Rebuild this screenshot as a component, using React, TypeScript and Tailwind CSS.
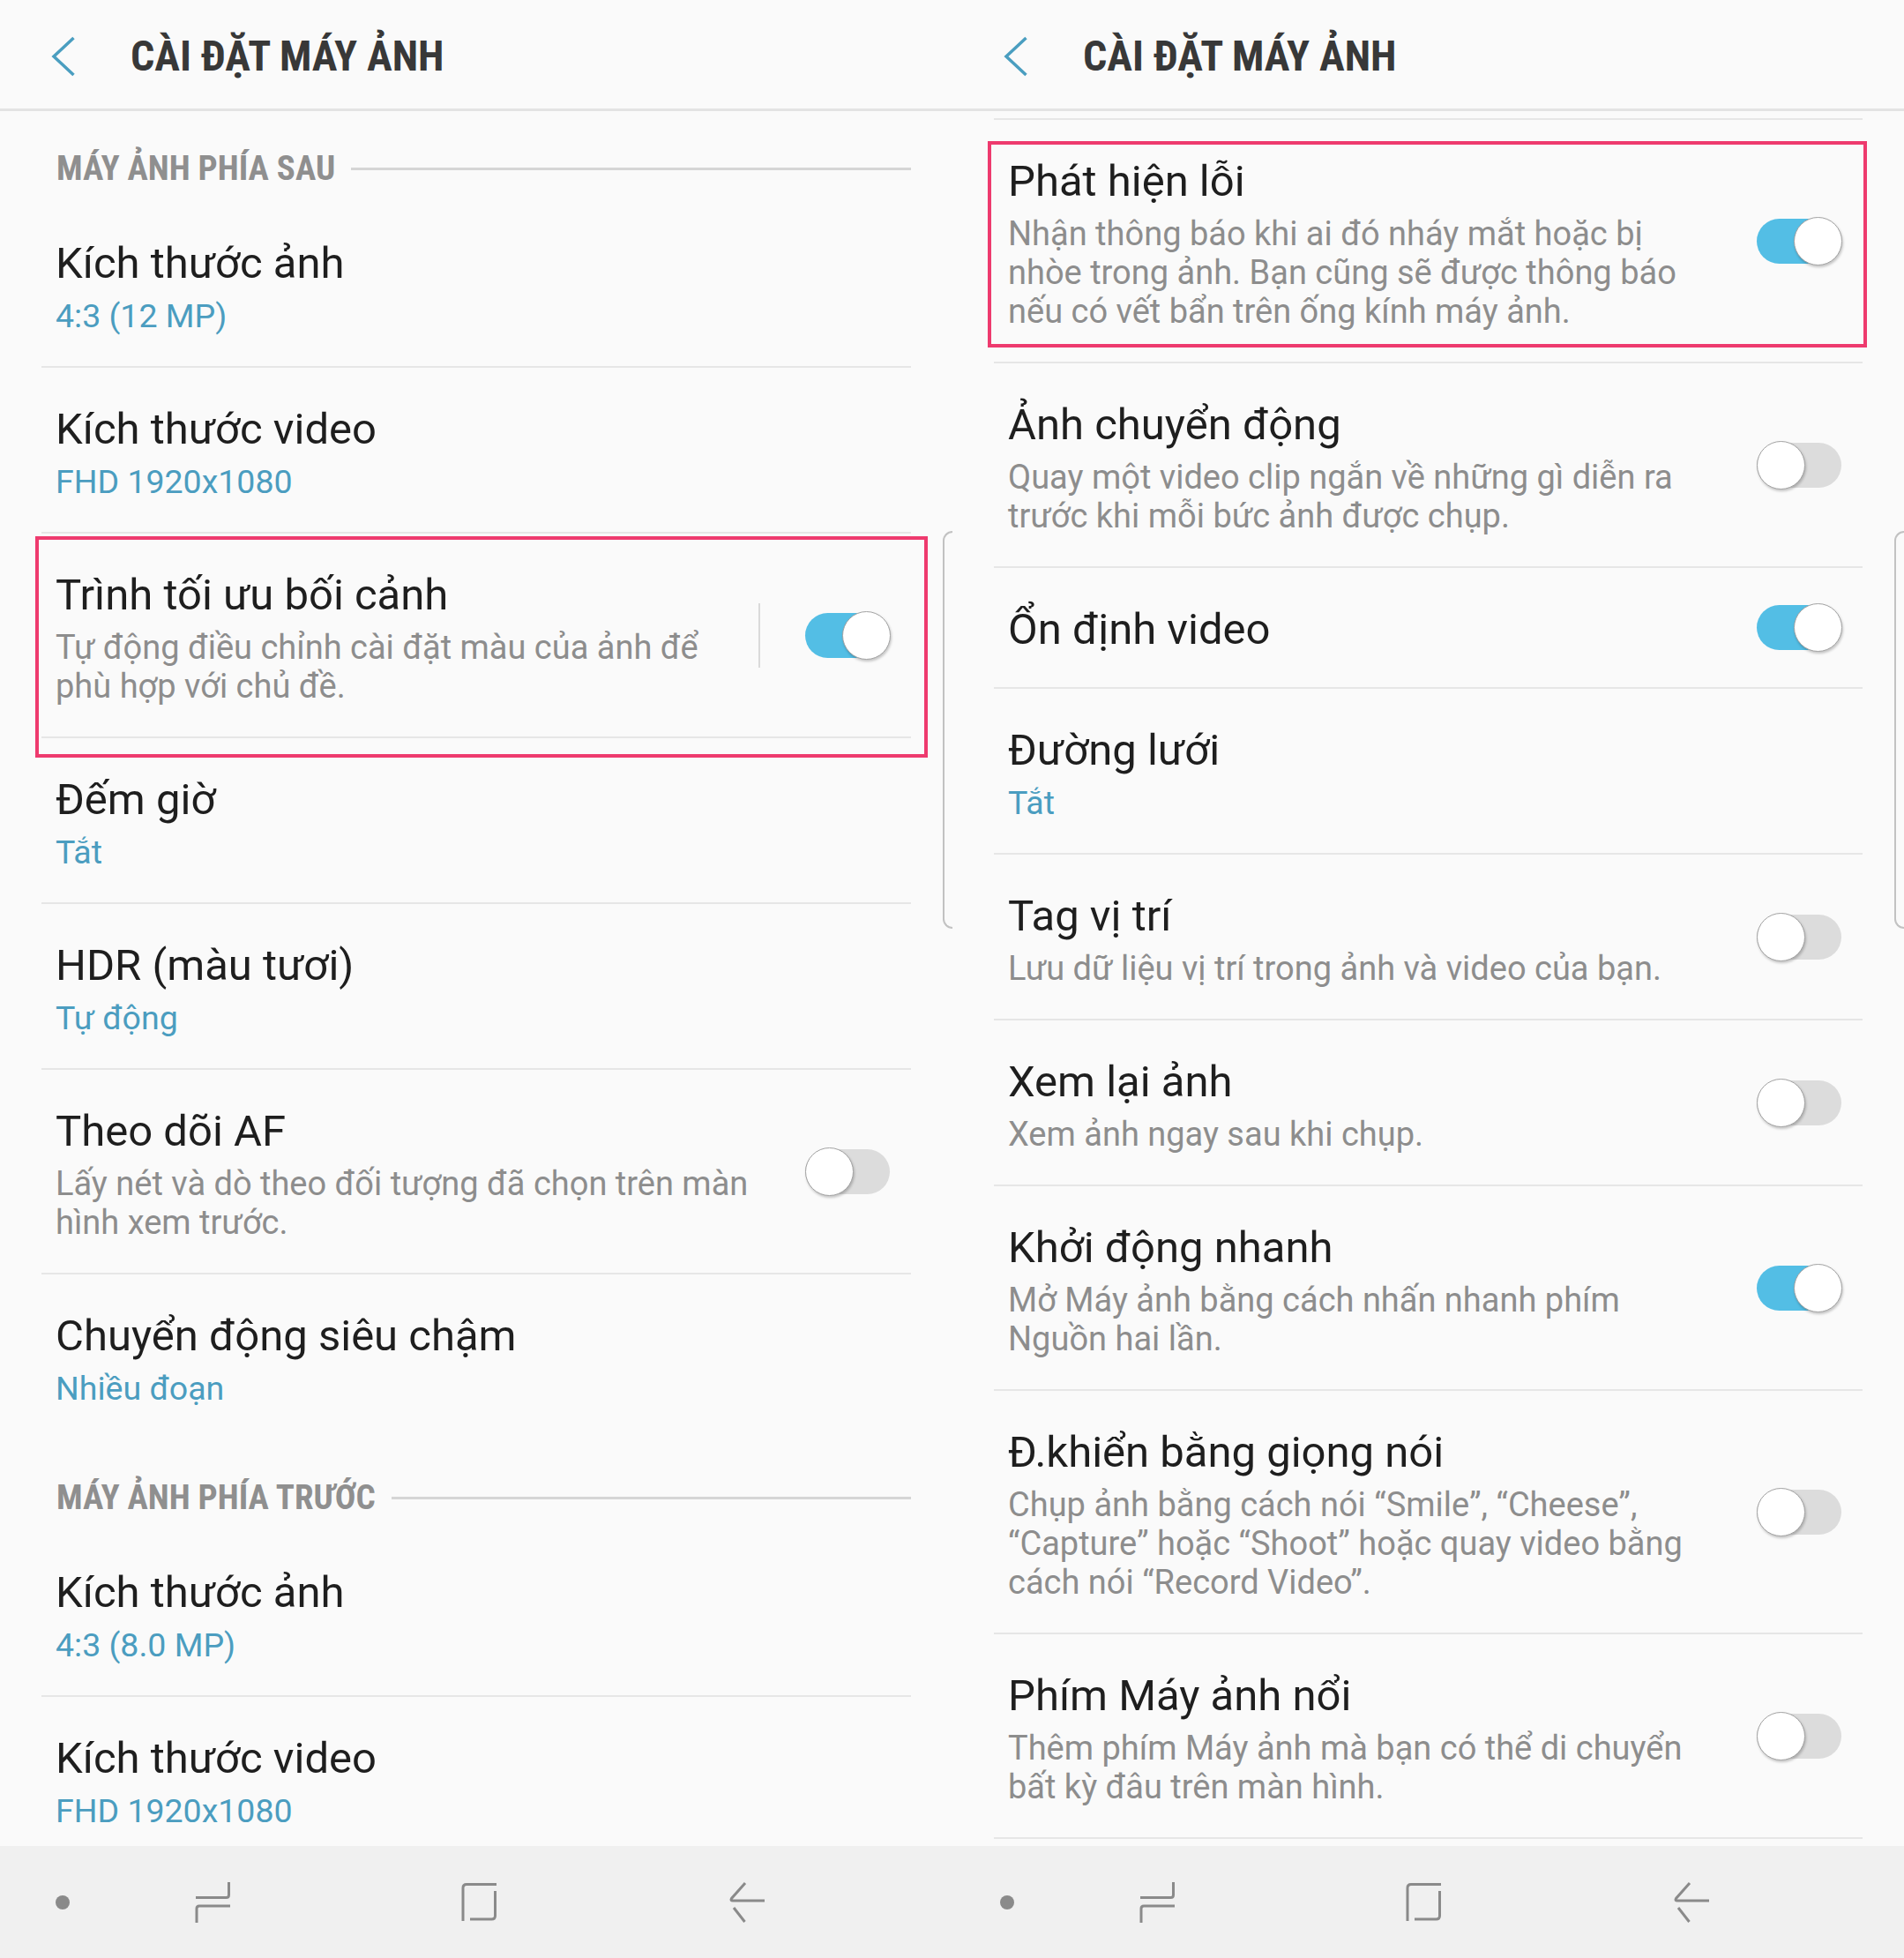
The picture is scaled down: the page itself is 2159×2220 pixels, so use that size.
import type React from "react";

type Row = {
  title: string;
  sub?: string;
  desc?: string[];
  toggle?: "on" | "off";
  separator?: boolean;
  noDivider?: boolean;
};

type Block = { section: string } | Row;

const LEFT: Block[] = [
  { section: "MÁY ẢNH PHÍA SAU" },
  { title: "Kích thước ảnh", sub: "4:3 (12 MP)" },
  { title: "Kích thước video", sub: "FHD 1920x1080" },
  {
    title: "Trình tối ưu bối cảnh",
    desc: ["Tự động điều chỉnh cài đặt màu của ảnh để", "phù hợp với chủ đề."],
    toggle: "on",
    separator: true,
  },
  { title: "Đếm giờ", sub: "Tắt" },
  { title: "HDR (màu tươi)", sub: "Tự động" },
  {
    title: "Theo dõi AF",
    desc: ["Lấy nét và dò theo đối tượng đã chọn trên màn", "hình xem trước."],
    toggle: "off",
  },
  { title: "Chuyển động siêu chậm", sub: "Nhiều đoạn", noDivider: true },
  { section: "MÁY ẢNH PHÍA TRƯỚC" },
  { title: "Kích thước ảnh", sub: "4:3 (8.0 MP)" },
  { title: "Kích thước video", sub: "FHD 1920x1080" },
];

const RIGHT: Block[] = [
  {
    title: "Phát hiện lỗi",
    desc: [
      "Nhận thông báo khi ai đó nháy mắt hoặc bị",
      "nhòe trong ảnh. Bạn cũng sẽ được thông báo",
      "nếu có vết bẩn trên ống kính máy ảnh.",
    ],
    toggle: "on",
  },
  {
    title: "Ảnh chuyển động",
    desc: ["Quay một video clip ngắn về những gì diễn ra", "trước khi mỗi bức ảnh được chụp."],
    toggle: "off",
  },
  { title: "Ổn định video", toggle: "on" },
  { title: "Đường lưới", sub: "Tắt" },
  {
    title: "Tag vị trí",
    desc: ["Lưu dữ liệu vị trí trong ảnh và video của bạn."],
    toggle: "off",
  },
  { title: "Xem lại ảnh", desc: ["Xem ảnh ngay sau khi chụp."], toggle: "off" },
  {
    title: "Khởi động nhanh",
    desc: ["Mở Máy ảnh bằng cách nhấn nhanh phím", "Nguồn hai lần."],
    toggle: "on",
  },
  {
    title: "Đ.khiển bằng giọng nói",
    desc: [
      "Chụp ảnh bằng cách nói “Smile”, “Cheese”,",
      "“Capture” hoặc “Shoot” hoặc quay video bằng",
      "cách nói “Record Video”.",
    ],
    toggle: "off",
  },
  {
    title: "Phím Máy ảnh nổi",
    desc: ["Thêm phím Máy ảnh mà bạn có thể di chuyển", "bất kỳ đâu trên màn hình."],
    toggle: "off",
  },
];

const narrow = "font-['Liberation_Sans_Narrow','Roboto_Condensed',Roboto,sans-serif] font-bold";

const Toggle: React.FC<{ on: boolean }> = ({ on }) => (
  <div className="relative w-[97px] h-[55px] shrink-0">
    <div
      className={`absolute left-0 right-[1px] top-[2px] h-[51px] rounded-full ${
        on ? "bg-[#53bee5]" : "bg-[#dcdcdc]"
      }`}
    />
    <div
      className={`absolute top-0 ${
        on ? "right-0" : "left-0"
      } w-[55px] h-[55px] rounded-full bg-white border border-[#a3a3a3] shadow-[1px_2px_3px_rgba(0,0,0,0.22)]`}
    />
  </div>
);

const SettingRow: React.FC<{ row: Row }> = ({ row }) => (
  <div>
    <div className="flex items-center pl-[63px] pr-[70px]">
      <div className="flex-1 min-w-0 pt-[40px] pb-[35px]">
        <div className="text-[49px] leading-[60px] text-[#1e1e1e] whitespace-nowrap">
          {row.title}
        </div>
        {row.sub && (
          <div className="mt-[7px] text-[37.5px] leading-[44px] text-[#4b9dc0] whitespace-nowrap">
            {row.sub}
          </div>
        )}
        {row.desc && (
          <div className="mt-[7px] text-[38px] leading-[44px] text-[#8d8d8d]">
            {row.desc.map((line) => (
              <div key={line} className="whitespace-nowrap">
                {line}
              </div>
            ))}
          </div>
        )}
      </div>
      {row.separator && <div className="w-[2px] h-[73px] bg-[#dadada] mr-[51px]" />}
      {row.toggle && <Toggle on={row.toggle === "on"} />}
    </div>
    <div className={`mx-[47px] h-[2px] ${row.noDivider ? "" : "bg-[#e6e6e6]"}`} />
  </div>
);

const SectionHeader: React.FC<{ label: string }> = ({ label }) => (
  <div className="h-[103px] pt-[45px] pl-[64px] pr-[47px]">
    <div className="flex items-center h-[40px]">
      <span className={`${narrow} text-[39px] leading-[40px] text-[#8f8f8f] whitespace-nowrap`}>
        {label}
      </span>
      <div className="flex-1 h-[3px] bg-[#d5d5d5] ml-[18px]" />
    </div>
  </div>
);

const NavBar: React.FC<{ shift: number }> = ({ shift }) => (
  <div className="h-[127px] shrink-0 bg-[#f0f0f0] flex items-center">
    <div
      className={`w-[16px] h-[16px] rounded-full bg-[#8a8a8a] ${
        shift ? "ml-[54px]" : "ml-[63px]"
      }`}
    />
    <svg width="42" height="48" viewBox="0 0 42 48" className="ml-[142px]" fill="none">
      <g stroke="#8a8a8a" strokeWidth="3" strokeLinecap="butt">
        <path d="M38.5 1 V15.5 Q38.5 18.5 35.5 18.5 H1" />
        <path d="M40 28 H5 Q2 28 2 31 V47" />
      </g>
    </svg>
    <svg width="42" height="46" viewBox="0 0 42 46" className="ml-[260px]" fill="none">
      <g stroke="#8a8a8a" strokeWidth="3">
        <path d="M40 2.5 H6 Q2 2.5 2 6.5 V44" />
        <path d="M38.5 10 V38 Q38.5 42 34.5 42 H10" />
      </g>
    </svg>
    <svg width="42" height="46" viewBox="0 0 42 46" className="ml-[261px]" fill="none">
      <g stroke="#8a8a8a" strokeWidth="3">
        <path d="M19 1 L3.5 18.5 Q2 21 5 21 H41" />
        <path d="M6 29 L18.5 45" />
      </g>
    </svg>
  </div>
);

const Panel: React.FC<{
  blocks: Block[];
  right?: boolean;
}> = ({ blocks, right }) => (
  <div className={`relative flex flex-col h-[2220px] ${right ? "w-[1079px]" : "w-[1080px]"}`}>
    <header className="h-[126px] shrink-0 border-b-[3px] border-[#e3e3e3] flex items-center pt-[4px]">
      <svg width="28" height="46" viewBox="0 0 28 46" fill="none" className="ml-[58px]">
        <path d="M25.5 2 L3 23 L25.5 44" stroke="#4a9ec0" strokeWidth="3.5" />
      </svg>
      <h1 className={`${narrow} ml-[62px] text-[48px] leading-[56px] text-[#383838] whitespace-nowrap`}>
        CÀI ĐẶT MÁY ẢNH
      </h1>
    </header>

    <div className="flex-1 min-h-0 overflow-hidden">
      {right && (
        <>
          <div className="h-[8px]" />
          <div className="mx-[47px] h-[2px] bg-[#e6e6e6]" />
        </>
      )}
      {blocks.map((b, i) =>
        "section" in b ? (
          <SectionHeader key={i} label={b.section} />
        ) : (
          <SettingRow key={i} row={b} />
        ),
      )}
    </div>

    <NavBar shift={right ? 9 : 0} />

    {/* highlight boxes */}
    {right ? (
      <div className="absolute left-[40px] top-[160px] w-[997px] h-[234px] border-[4px] border-[#ee3a6e]" />
    ) : (
      <div className="absolute left-[40px] top-[608px] w-[1012px] h-[251px] border-[4px] border-[#ee3a6e]" />
    )}

    {/* edge panel handle */}
    <div
      className={`absolute top-[602px] h-[451px] w-[11px] border-l-2 border-t-2 border-b-2 border-[#c2c2c2] rounded-l-[12px] ${
        right ? "left-[1068px]" : "left-[1069px]"
      }`}
    />
  </div>
);

export default function App() {
  return (
    <div className="w-[2159px] h-[2220px] overflow-hidden bg-[#fafafa] flex font-['Roboto',sans-serif]">
      <Panel blocks={LEFT} />
      <Panel blocks={RIGHT} right />
    </div>
  );
}
